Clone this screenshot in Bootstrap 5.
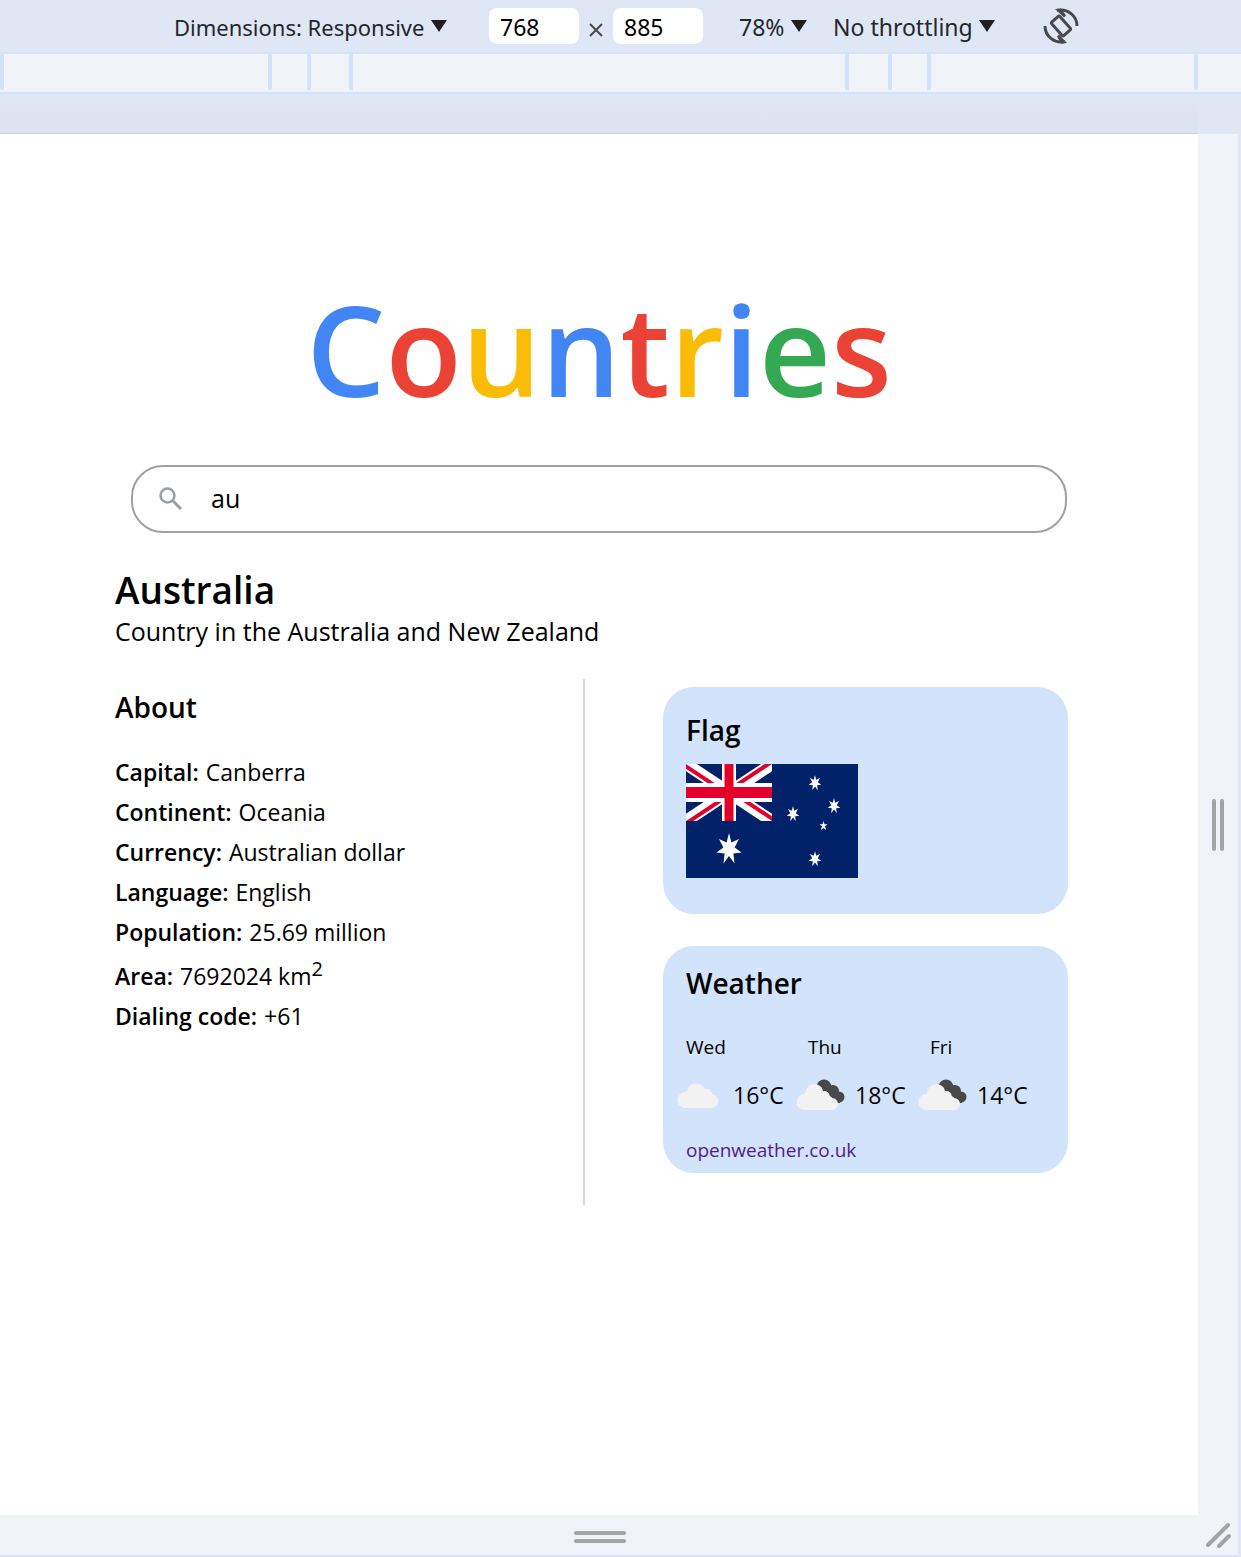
<!DOCTYPE html>
<html lang="en">
<head>
<meta charset="utf-8">
<meta name="viewport" content="width=device-width, initial-scale=1">
<title>Countries</title>
<link rel="stylesheet" href="https://cdn.jsdelivr.net/npm/bootstrap@5.3.0/dist/css/bootstrap.min.css">
<style>
  :root { --chrome: #e0e7f4; --rule: #d3e3fd; --strip: #f0f4f9; }
  body { font-family: "Open Sans", "Noto Sans", sans-serif; color: #000; background: var(--chrome); }

  /* device toolbar */
  .device-bar { height: 52px; padding-right: 0; padding-left: 12px; font-family: "Noto Sans", "Open Sans", sans-serif; font-size: 23px; color: #24262a; }
  .picker { display: flex; align-items: center; }
  .picker select { appearance: none; border: 0; background: none; color: inherit; font: inherit; line-height: 32px; padding: 2px 22px 0 0; }
  .picker svg { width: 16px; height: 12px; margin-left: -16px; pointer-events: none; fill: #1f1f1f; }
  .dims-pick { font-size: 22px; margin-right: 42px; }
  .zoom-pick { margin: 0 26px 0 36px; }
  .net-pick { margin-right: 48px; }
  .size-box { width: 90px; height: 36px; border: 0; border-radius: 8px; padding: 2px 0 0 11px; background: #fff; color: #000; font: inherit; }
  .times { width: 34px; }
  .turn { border: 0; background: none; padding: 0; line-height: 0; }

  /* breakpoint ruler */
  .ruler { height: 42px; border: solid var(--rule); border-width: 2px 0; background: var(--strip); padding-right: 43px; }
  .ruler span { height: 36px; border-right: 4px solid #d3e1fb; flex: 1 1 0; }
  .ruler .edge { flex: 0 0 4px; }
  .shade { height: 40px; margin-right: 43px; background: linear-gradient(#dfe7f4, #dce2ef); border-bottom: 1px solid #cdd0d8; }

  /* emulated page and its drag handles */
  .frame { border-right: 3px solid #e0e7f8; border-bottom: 2px solid #dce6f8; background: var(--strip); }
  .side-handle { width: 40px; }
  .side-handle i, .foot-handle i { display: block; border-radius: 2px; background: #a3a5a5; }
  .side-handle i { width: 4px; height: 52px; }
  .foot-handle { height: 40px; }
  .foot-handle .bars { padding: 4px 0 0 2px; }
  .foot-handle i { width: 52px; height: 4px; }
  .page { padding: 135px 130px 144px 115px; }

  .logo { font-size: 125px; line-height: 160px; font-weight: 600; margin: 0 0 36px 15px; }
  .blue { color: #4285f4; } .red { color: #ea4335; } .gold { color: #fbbc05; } .green { color: #34a853; }
  .search { height: 68px; margin: 0 1px 0 16px; padding-left: 26px; border: 2px solid #a0a0a0; border-radius: 32px; }
  .search input { border: 0; outline: 0; background: none; font-size: 25px; color: #000; margin-left: 26px; }
  h1 { font-size: 37px; line-height: 48px; font-weight: 600; margin: 33px 0 0; }
  .tagline { font-size: 25px; line-height: 36px; margin: -1px 0 30px; }
  h2 { font-size: 28px; line-height: 40px; font-weight: 600; margin: 0; }
  .about { width: 49.3%; min-height: 526px; padding-top: 8px; border-right: 2px solid #d8d8d8; }
  .facts { margin: 25px 0 0; font-size: 23px; line-height: 40px; }
  .facts > div { display: flex; gap: 7px; }
  .facts dt { font-weight: 600; }
  .facts dd { margin: 0; }
  .facts sup { font-size: 20px; line-height: 0; top: -9px; }
  .facts .tall { padding-top: 4px; }
  .panels { width: 42.5%; gap: 32px; padding-top: 8px; }
  .panel { min-height: 227px; padding: 23px 23px 0; border-radius: 31px; background: #d2e3fc; }
  .panel.forecast { padding-top: 17px; }
  .flag { display: block; width: 172px; height: 114px; margin-top: 14px; }
  .day { flex: none; width: 122px; font-size: 19px; line-height: 28px; }
  .days { margin-top: 30px; }
  .sky { margin: 13px 0 0 -9px; }
  .sky svg { width: 50px; height: 42px; flex: none; margin-right: 6px; overflow: visible; }
  .sky span { font-size: 23px; line-height: 42px; white-space: nowrap; }
  .source { display: block; font-size: 19px; line-height: 28px; margin-top: 20px; color: #551a8b; text-decoration: none; }
</style>
<script src="https://cdn.jsdelivr.net/npm/bootstrap@5.3.0/dist/js/bootstrap.bundle.min.js"></script>
</head>
<body class="d-flex flex-column min-vh-100">

<header class="device-bar d-flex align-items-center justify-content-center">
  <label class="picker dims-pick"><select aria-label="Dimensions"><option>Dimensions: Responsive</option></select><svg viewBox="0 0 16 12"><path d="M0 0h16L8 12z"/></svg></label>
  <input class="size-box" type="text" value="768" aria-label="Width">
  <svg class="times" height="34" viewBox="0 0 34 34"><path d="M11 15l12 12M23 15L11 27" stroke="#47494d" stroke-width="2"/></svg>
  <input class="size-box" type="text" value="885" aria-label="Height">
  <label class="picker zoom-pick"><select aria-label="Zoom"><option>78%</option></select><svg viewBox="0 0 16 12"><path d="M0 0h16L8 12z"/></svg></label>
  <label class="picker net-pick"><select aria-label="Throttling"><option>No throttling</option></select><svg viewBox="0 0 16 12"><path d="M0 0h16L8 12z"/></svg></label>
  <button class="turn" type="button" aria-label="Rotate">
    <svg width="36" height="36" viewBox="0 0 36 36" fill="none" stroke="#47494d" stroke-width="3"><rect x="12.500" y="9" width="11" height="18" rx="1.500" transform="rotate(-42 18 18)"/><path d="M2 18a16 16 0 0 0 20 15.500M34 18A16 16 0 0 0 14 2.500"/><path fill="#47494d" stroke="none" d="M12 1l6-.5 5 7-2 2zM24 35l-6 .5-4-7 2-2z"/></svg>
  </button>
</header>

<div class="ruler d-flex">
  <span class="edge"></span>
  <span style="flex-grow:264"></span><span style="flex-grow:35"></span><span style="flex-grow:38"></span><span style="flex-grow:492"></span><span style="flex-grow:39"></span><span style="flex-grow:35"></span><span style="flex-grow:263"></span>
</div>
<div class="shade"></div>

<div class="frame d-flex flex-column flex-grow-1">
  <div class="d-flex flex-grow-1">
    <main class="page bg-white flex-grow-1">
      <div class="logo text-center"><span class="blue">C</span><span class="red">o</span><span class="gold">u</span><span class="blue">n</span><span class="red">t</span><span class="gold">r</span><span class="blue">i</span><span class="green">e</span><span class="red">s</span></div>
      <form class="search d-flex align-items-center">
        <svg width="24" height="24" viewBox="0 0 24 24" fill="none" stroke="#9aa0a6"><circle cx="8.500" cy="8.500" r="7" stroke-width="2.500"/><path d="M13.500 13.500l8.500 8.500" stroke-width="3"/></svg>
        <input class="flex-grow-1" type="text" value="au" aria-label="Search countries">
      </form>
      <h1>Australia</h1>
      <p class="tagline">Country in the Australia and New Zealand</p>
      <div class="d-flex justify-content-between">
        <section class="about">
          <h2>About</h2>
          <dl class="facts">
            <div><dt>Capital:</dt><dd>Canberra</dd></div>
            <div><dt>Continent:</dt><dd>Oceania</dd></div>
            <div><dt>Currency:</dt><dd>Australian dollar</dd></div>
            <div><dt>Language:</dt><dd>English</dd></div>
            <div><dt>Population:</dt><dd>25.69 million</dd></div>
            <div class="tall"><dt>Area:</dt><dd>7692024 km<sup>2</sup></dd></div>
            <div><dt>Dialing code:</dt><dd>+61</dd></div>
          </dl>
        </section>
        <div class="panels d-flex flex-column">
          <section class="panel">
            <h2>Flag</h2>
            <svg class="flag" viewBox="0 0 172 114" role="img" aria-label="Flag of Australia">
              <defs>
                <clipPath id="canton"><path d="M0 0h86v57H0z"/></clipPath>
                <clipPath id="arms"><path d="M43 28.500H86V57zM43 28.500V57H0zM43 28.500H0V0zM43 28.500V0H86z"/></clipPath>
                <path id="star7" d="M0-16L3-6.400 12.500-10 7-1.500 15.600 3.600 5.500 4.500 6.900 14.400 0 7-6.900 14.400-5.500 4.500-15.600 3.600-7-1.500-12.500-10-3-6.400z"/>
              </defs>
              <path fill="#012169" d="M0 0h172v114H0z"/>
              <g clip-path="url(#canton)">
                <path stroke="#fff" stroke-width="12" d="M0 0l86 57M86 0L0 57"/>
                <path clip-path="url(#arms)" stroke="#e4002b" stroke-width="8" d="M0 0l86 57M86 0L0 57"/>
                <path stroke="#fff" stroke-width="14" d="M43 0v57"/>
                <path stroke="#fff" stroke-width="19" d="M0 28.500h86"/>
                <path stroke="#e4002b" stroke-width="9" d="M43 0v57"/>
                <path stroke="#e4002b" stroke-width="11" d="M0 28.500h86"/>
              </g>
              <g fill="#fff">
                <use href="#star7" transform="translate(43 85) scale(.8 1)"/>
                <use href="#star7" transform="translate(129 19) scale(.4 .5)"/>
                <use href="#star7" transform="translate(107 50) scale(.4 .5)"/>
                <use href="#star7" transform="translate(148 42) scale(.4 .5)"/>
                <use href="#star7" transform="translate(129 95) scale(.4 .5)"/>
                <path d="M137.500 57l1 3.300h3l-2.500 2 1.200 3.700-2.700-2-2.700 2 1.200-3.700-2.500-2h3z"/>
              </g>
            </svg>
          </section>
          <section class="panel forecast">
            <h2>Weather</h2>
            <div class="days d-flex">
              <div class="day">Wed<div class="sky d-flex"><svg viewBox="0 0 50 42"><path fill="#f2f2f2" d="M9 34a8 8 0 0 1-1-16q1-1 2-.500a9.500 9.500 0 0 1 18-2.500c3-1 7 1 7 5a7 7 0 0 1-1 14z"/></svg><span>16°C</span></div></div>
              <div class="day">Thu<div class="sky d-flex"><svg viewBox="0 0 50 42"><g fill="#484848"><circle cx="25" cy="13" r="7.500"/><circle cx="34" cy="17" r="6"/><circle cx="40" cy="23" r="5.500"/><path d="M25 13l12 16 4 0 0-10z"/></g><path fill="#f2f2f2" d="M5 36a8 8 0 0 1 1-16q0-2 1-4a9 9 0 0 1 14-4q3 2 3 5a6 6 0 0 1 7 6v1h2a6 6 0 0 1 0 12z"/></svg><span>18°C</span></div></div>
              <div class="day">Fri<div class="sky d-flex"><svg viewBox="0 0 50 42"><g fill="#484848"><circle cx="25" cy="13" r="7.500"/><circle cx="34" cy="17" r="6"/><circle cx="40" cy="23" r="5.500"/><path d="M25 13l12 16 4 0 0-10z"/></g><path fill="#f2f2f2" d="M5 36a8 8 0 0 1 1-16q0-2 1-4a9 9 0 0 1 14-4q3 2 3 5a6 6 0 0 1 7 6v1h2a6 6 0 0 1 0 12z"/></svg><span>14°C</span></div></div>
            </div>
            <a class="source" href="#">openweather.co.uk</a>
          </section>
        </div>
      </div>
    </main>
    <div class="side-handle d-flex justify-content-center align-items-center gap-1 flex-shrink-0"><i></i><i></i></div>
  </div>
  <div class="foot-handle d-flex">
    <div class="bars flex-grow-1 d-flex flex-column justify-content-center align-items-center gap-1"><i></i><i></i></div>
    <svg width="40" height="40" viewBox="0 0 40 40" stroke="#a3a5a5" stroke-width="4" stroke-linecap="round"><path d="M10 30L30 10M21 31L31 21"/></svg>
  </div>
</div>
</body>
</html>
